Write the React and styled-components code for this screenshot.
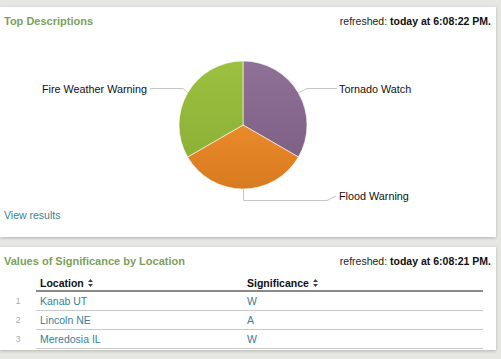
import React from "react";
import styled, { createGlobalStyle } from "styled-components";

const Global = createGlobalStyle`
  html, body {
    margin: 0;
    padding: 0;
    background: #e6e6e2;
    font-family: "Liberation Sans", Arial, Helvetica, sans-serif;
  }
`;

const Page = styled.div`
  width: 501px;
  height: 359px;
  overflow: hidden;
  padding-top: 7px;
  box-sizing: border-box;
  display: flex;
  flex-direction: column;
  gap: 10px;
`;

const Panel = styled.div`
  background: #fff;
  width: 496px;
  height: ${(p) => p.h}px;
  box-sizing: border-box;
  box-shadow: 0 1px 3px rgba(0, 0, 0, 0.22);
  display: flex;
  flex-direction: column;
`;

const Header = styled.div`
  display: flex;
  justify-content: space-between;
  align-items: center;
  height: 26px;
  padding: 1px 5px 0 4px;
`;

const Title = styled.div`
  color: #7c9f5c;
  font-weight: bold;
  font-size: 11px;
`;

const Refreshed = styled.div`
  font-size: 10.5px;
  color: #222;
  b {
    color: #111;
  }
`;

const Chart = styled.svg`
  display: block;
  margin-top: -4px;
`;

const Link = styled.a`
  color: #3a8095;
  font-size: 10.5px;
  text-decoration: none;
  padding-left: 4px;
  margin-top: 2px;
`;

const Table = styled.table`
  border-collapse: collapse;
  table-layout: fixed;
  width: 483px;
  margin-top: 1px;
  font-size: 10.5px;
`;

const Th = styled.th`
  text-align: left;
  font-weight: bold;
  color: #111;
  padding: 0 0 0 4px;
  height: 15px;
  border-bottom: ${(p) => (p.num ? "none" : "2px solid #8a8a8a")};
  width: ${(p) => p.w || "auto"};
`;

const Td = styled.td`
  padding: 0 0 0 4px;
  height: 18px;
  border-bottom: 1px solid #c9c9c9;
  color: #3a8095;
`;

const Num = styled.td`
  padding: 0;
  text-align: center;
  font-size: 8.5px;
  color: #aaa;
  height: 18px;
`;

const Sort = () => (
  <svg width="5" height="8" viewBox="0 0 5 8" style={{ marginLeft: 4 }}>
    <path d="M2.5 0 L5 3 L0 3 Z M2.5 8 L5 5 L0 5 Z" fill="#444" />
  </svg>
);

const cx = 243;
const cy = 95;
const r = 64;
const pt = (deg) => {
  const a = (deg * Math.PI) / 180;
  return [cx + r * Math.sin(a), cy - r * Math.cos(a)];
};
const slice = (a0, a1) => {
  const [x0, y0] = pt(a0);
  const [x1, y1] = pt(a1);
  return `M${cx},${cy} L${x0},${y0} A${r},${r} 0 0 1 ${x1},${y1} Z`;
};

const Pie = () => (
  <Chart width="496" height="177">
    <defs>
      <linearGradient id="gp" x1="0" y1="0" x2="0" y2="1">
        <stop offset="0" stopColor="#8f7197" />
        <stop offset="1" stopColor="#7f6186" />
      </linearGradient>
      <linearGradient id="go" x1="0" y1="0" x2="0" y2="1">
        <stop offset="0" stopColor="#e98b2a" />
        <stop offset="1" stopColor="#d87a1f" />
      </linearGradient>
      <linearGradient id="gg" x1="0" y1="0" x2="0" y2="1">
        <stop offset="0" stopColor="#9cc03f" />
        <stop offset="1" stopColor="#8cb136" />
      </linearGradient>
    </defs>
    <g fill="none" stroke="#c6c6c6" strokeWidth="1">
      <polyline points="150,58.5 183,58.5 188,63" />
      <polyline points="298,63 307,58.5 337,58.5" />
      <polyline points="243.5,159 243.5,170.5 327,170.5 336,166" />
    </g>
    <path d={slice(0, 120)} fill="url(#gp)" stroke="#fff" strokeWidth="0.6" />
    <path d={slice(120, 240)} fill="url(#go)" stroke="#fff" strokeWidth="0.6" />
    <path d={slice(240, 360)} fill="url(#gg)" stroke="#fff" strokeWidth="0.6" />
    <g fontSize="10.8" fill="#111" fontFamily="Liberation Sans, Arial, sans-serif">
      <text x="147" y="62.5" textAnchor="end">Fire Weather Warning</text>
      <text x="339" y="62.5">Tornado Watch</text>
      <text x="339" y="169.5">Flood Warning</text>
    </g>
  </Chart>
);

const rows = [
  ["1", "Kanab UT", "W"],
  ["2", "Lincoln NE", "A"],
  ["3", "Meredosia IL", "W"],
];

export default function App() {
  return (
    <>
      <Global />
      <Page>
        <Panel h={230}>
          <Header>
            <Title>Top Descriptions</Title>
            <Refreshed>
              refreshed: <b>today at 6:08:22 PM.</b>
            </Refreshed>
          </Header>
          <Pie />
          <Link href="#">View results</Link>
        </Panel>
        <Panel h={103}>
          <Header>
            <Title>Values of Significance by Location</Title>
            <Refreshed>
              refreshed: <b>today at 6:08:21 PM.</b>
            </Refreshed>
          </Header>
          <Table>
            <colgroup>
              <col style={{ width: 36 }} />
              <col style={{ width: 207 }} />
              <col />
            </colgroup>
            <thead>
              <tr>
                <Th num />
                <Th>
                  Location
                  <Sort />
                </Th>
                <Th>
                  Significance
                  <Sort />
                </Th>
              </tr>
            </thead>
            <tbody>
              {rows.map(([n, loc, sig]) => (
                <tr key={n}>
                  <Num>{n}</Num>
                  <Td>{loc}</Td>
                  <Td>{sig}</Td>
                </tr>
              ))}
            </tbody>
          </Table>
        </Panel>
      </Page>
    </>
  );
}
